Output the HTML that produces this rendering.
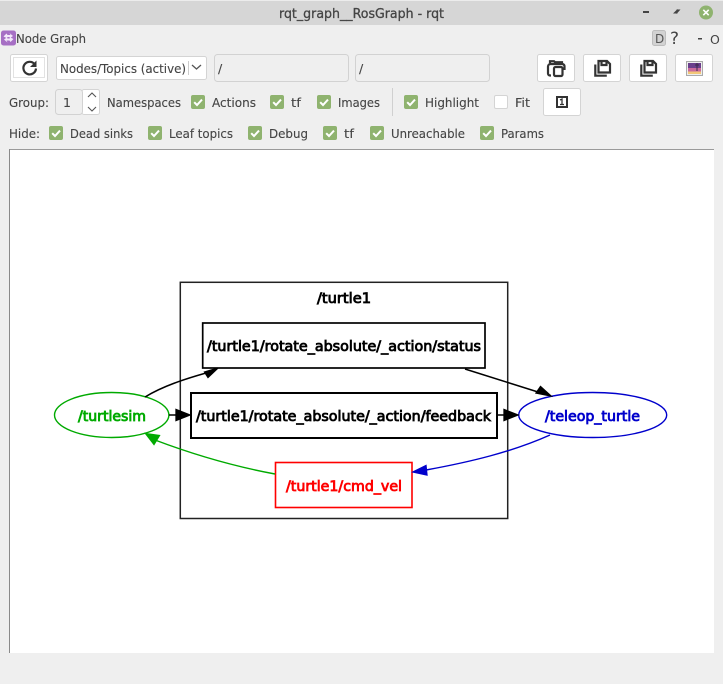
<!DOCTYPE html>
<html><head><meta charset="utf-8"><style>
html,body{margin:0;padding:0;background:#efefef;width:723px;height:684px;overflow:hidden}
svg{display:block}
.u{font-family:"DejaVu Sans",sans-serif;font-size:12.5px;fill:#444;stroke:#444;stroke-width:.12px}
.g{font-family:"DejaVu Sans",sans-serif;font-size:14px;stroke-width:.8px}
.btn{fill:#fff;stroke:#d4d4d4}
.chk{fill:#8fb36f}
</style></head><body>
<svg width="723" height="684" viewBox="0 0 723 684" xmlns="http://www.w3.org/2000/svg">
<defs>
<g id="ck"><rect width="14" height="14" rx="2" class="chk"/><path d="M3.200 7.200l2.800 2.800 5-5.400" fill="none" stroke="#fff" stroke-width="2"/></g>
<g id="sv"><path d="M5 1.500h8.500l3 3v8.500h-11.500zM8 1.500v4h5v-4" fill="none" stroke="#333" stroke-width="2.200"/><path d="M1.800 5v11.200h11.500" fill="none" stroke="#333" stroke-width="2.200"/></g>
</defs>
<rect width="723" height="684" fill="#efefef"/>
<!-- title bar -->
<rect width="723" height="25" fill="#d6d6d6"/><rect width="723" height="1" fill="#ececec"/>
<text x="279" y="18" textLength="165" lengthAdjust="spacingAndGlyphs" font-family="DejaVu Sans,sans-serif" font-size="13" fill="#444" stroke="#444" stroke-width=".3">rqt_graph__RosGraph - rqt</text>
<rect x="643" y="11" width="6" height="2" fill="#444"/>
<path d="M673 14l4.500-4.500V14zM680.500 10l-4 4.500V10z" fill="#444" transform="translate(0,-.5)"/>
<circle cx="706" cy="12.500" r="7" fill="#8fb36f"/><path d="M703.300 9.800l5.400 5.400M708.700 9.800l-5.400 5.400" stroke="#fff" stroke-width="1.600"/>
<!-- Node graph header -->
<rect x="1" y="30.500" width="15" height="15" rx="2.500" fill="#a66fc4"/>
<path d="M3.500 36.500l3-3 1 1.500h3l-1-2 3.500 3-3.500 2.500 .5-1.500h-3l.5 1.500zM13.500 39l-3 3-1-1.500h-3l1 2-3.500-3 3.500-2.500-.5 1.500h3l-.5-1.500z" fill="#f3e8fa"/>
<text class="u" x="16" y="43" textLength="70" lengthAdjust="spacingAndGlyphs">Node Graph</text>
<rect x="652.500" y="30.500" width="13" height="15" rx="2" fill="#d2d2d2" stroke="#bdbdbd"/>
<text x="655" y="43" font-family="DejaVu Sans,sans-serif" font-size="12" fill="#555">D</text>
<text x="670" y="44" font-family="DejaVu Sans,sans-serif" font-size="17" fill="#444">?</text>
<rect x="698" y="38" width="4" height="1.500" fill="#444"/>
<text x="710" y="44" font-family="DejaVu Sans,sans-serif" font-size="12.500" fill="#444">O</text>
<!-- toolbar row 1 -->
<rect class="btn" x="10.500" y="54.500" width="37" height="27" rx="2"/>
<rect x="13.500" y="57.500" width="31" height="20" fill="#fff" stroke="#e2e2e2"/>
<path d="M34.500 64a6.300 6.300 0 1 0 1.500 4.500" fill="none" stroke="#333" stroke-width="2.200"/><path d="M36.500 60.500v6.500h-6.500z" fill="#333"/>
<rect class="btn" x="56.500" y="56.500" width="150" height="23" rx="2"/>
<text class="u" x="60" y="73" textLength="126" lengthAdjust="spacingAndGlyphs">Nodes/Topics (active)</text>
<rect x="188" y="61" width="1" height="14" fill="#ccc"/>
<path d="M192 65l4.500 4 4.500-4" fill="none" stroke="#555" stroke-width="1.300"/>
<rect x="214.500" y="54.500" width="134" height="27" rx="3" fill="#efefef" stroke="#d2d2d2"/>
<text class="u" x="218" y="73">/</text>
<rect x="355.500" y="54.500" width="134" height="27" rx="3" fill="#efefef" stroke="#d2d2d2"/>
<text class="u" x="359" y="73">/</text>
<rect class="btn" x="537.500" y="54.500" width="37" height="27" rx="2"/>
<path d="M550 63v-1.800h4l1 1h7v2.300M551 75.500h-1a2 2 0 0 1-2-2v-7a2.500 2.500 0 0 1 2.500-2.500h12a2.500 2.500 0 0 1 2 2v4" fill="none" stroke="#333" stroke-width="2.200"/>
<rect x="554" y="67" width="8.500" height="9" rx="1.500" fill="#fff" stroke="#333" stroke-width="2.200"/>
<rect class="btn" x="583.500" y="54.500" width="37" height="27" rx="2"/>
<use href="#sv" x="593.500" y="59.500"/>
<rect class="btn" x="629.500" y="54.500" width="37" height="27" rx="2"/>
<use href="#sv" x="639.500" y="59.500"/>
<rect class="btn" x="675.500" y="54.500" width="37" height="27" rx="2"/>
<rect x="686.500" y="61.500" width="16" height="14" fill="#eee" stroke="#aaa"/>
<rect x="688" y="63" width="13" height="11" fill="#6a3f8c"/><rect x="688" y="68" width="13" height="3.500" fill="#c9699b"/><rect x="688" y="71.500" width="13" height="2.500" fill="#f2c878"/><path d="M697 63v8M695 65h4" stroke="#3b2a4a"/>
<!-- row 2 -->
<text class="u" x="9" y="107" textLength="40" lengthAdjust="spacingAndGlyphs">Group:</text>
<rect x="82" y="89.500" width="17.500" height="25" rx="2" fill="#fff" stroke="#d4d4d4"/>
<rect x="55.500" y="89.500" width="27" height="25" rx="3" fill="#efefef" stroke="#d2d2d2"/>
<text class="u" x="63" y="107">1</text>
<path d="M88 97l4-4 4 4M88 107l4 4 4-4" fill="none" stroke="#555" stroke-width="1.100"/>
<text class="u" x="107" y="107" textLength="74" lengthAdjust="spacingAndGlyphs">Namespaces</text>
<use href="#ck" x="191" y="95"/><text class="u" x="212" y="107" textLength="44" lengthAdjust="spacingAndGlyphs">Actions</text>
<use href="#ck" x="270" y="95"/><text class="u" x="291" y="107" textLength="10" lengthAdjust="spacingAndGlyphs">tf</text>
<use href="#ck" x="317" y="95"/><text class="u" x="338" y="107" textLength="42" lengthAdjust="spacingAndGlyphs">Images</text>
<rect x="392" y="88" width="1" height="28" fill="#d0d0d0"/>
<use href="#ck" x="404" y="95"/><text class="u" x="425" y="107" textLength="54" lengthAdjust="spacingAndGlyphs">Highlight</text>
<rect x="494.500" y="95.500" width="13" height="13" rx="1.500" fill="#fff" stroke="#d4d4d4"/><text class="u" x="515" y="107" textLength="15" lengthAdjust="spacingAndGlyphs">Fit</text>
<rect class="btn" x="543.500" y="88.500" width="37" height="27" rx="2"/>
<rect x="557" y="97" width="10" height="10" fill="none" stroke="#333" stroke-width="2"/><path d="M560 100l2-1v5.500M560 104.500h4" fill="none" stroke="#333" stroke-width="1.300"/>
<!-- row 3 -->
<text class="u" x="9" y="138" textLength="31" lengthAdjust="spacingAndGlyphs">Hide:</text>
<use href="#ck" x="49" y="126"/><text class="u" x="70" y="138" textLength="63" lengthAdjust="spacingAndGlyphs">Dead sinks</text>
<use href="#ck" x="148" y="126"/><text class="u" x="169" y="138" textLength="64" lengthAdjust="spacingAndGlyphs">Leaf topics</text>
<use href="#ck" x="248" y="126"/><text class="u" x="269" y="138" textLength="39" lengthAdjust="spacingAndGlyphs">Debug</text>
<use href="#ck" x="323" y="126"/><text class="u" x="344" y="138" textLength="10" lengthAdjust="spacingAndGlyphs">tf</text>
<use href="#ck" x="370" y="126"/><text class="u" x="391" y="138" textLength="74" lengthAdjust="spacingAndGlyphs">Unreachable</text>
<use href="#ck" x="480" y="126"/><text class="u" x="501" y="138" textLength="43" lengthAdjust="spacingAndGlyphs">Params</text>
<!-- graph view -->
<rect x="9" y="149" width="705" height="504" fill="#fff"/>
<rect x="9" y="149" width="705" height="1" fill="#9a9a9a"/>
<rect x="9" y="149" width="1" height="504" fill="#8a8a8a"/>
<rect x="180.300" y="282.300" width="327.400" height="236.200" fill="none" stroke="#222" stroke-width="1.500"/>
<text class="g" x="317" y="303" textLength="54" lengthAdjust="spacingAndGlyphs" fill="#000" stroke="#000">/turtle1</text>
<rect x="202.700" y="323" width="282.300" height="45" fill="none" stroke="#000" stroke-width="1.700"/>
<text class="g" x="207" y="351" textLength="274" lengthAdjust="spacingAndGlyphs" fill="#000" stroke="#000">/turtle1/rotate_absolute/_action/status</text>
<rect x="191" y="393" width="306" height="45" fill="none" stroke="#000" stroke-width="2"/>
<text class="g" x="196" y="421" textLength="295" lengthAdjust="spacingAndGlyphs" fill="#000" stroke="#000">/turtle1/rotate_absolute/_action/feedback</text>
<rect x="275.500" y="462.500" width="136.500" height="45" fill="none" stroke="#f00" stroke-width="1.600"/>
<text class="g" x="286" y="491" textLength="116" lengthAdjust="spacingAndGlyphs" fill="#f00" stroke="#f00">/turtle1/cmd_vel</text>
<ellipse cx="111.700" cy="415" rx="57.200" ry="22.500" fill="none" stroke="#00aa00" stroke-width="1.400"/>
<text class="g" x="78" y="421" textLength="68" lengthAdjust="spacingAndGlyphs" fill="#00aa00" stroke="#00aa00">/turtlesim</text>
<ellipse cx="592.700" cy="415" rx="74" ry="22.500" fill="none" stroke="#0000cc" stroke-width="1.400"/>
<text class="g" x="545" y="421" textLength="95" lengthAdjust="spacingAndGlyphs" fill="#0000cc" stroke="#0000cc">/teleop_turtle</text>
<!-- edges -->
<path d="M145 397C163 386 185 379 206 373" fill="none" stroke="#000" stroke-width="1.500"/>
<path d="M218 368L204.500 372 208 377.500z" fill="#000" stroke="#000" stroke-width="1.300"/>
<path d="M169 415H177" stroke="#000" stroke-width="1.500"/>
<path d="M190 415L176 409.500V420.500z" fill="#000" stroke="#000" stroke-width="1.300"/>
<path d="M465 369L538 392" fill="none" stroke="#000" stroke-width="1.500"/>
<path d="M551 396L540.500 386.500 536 393z" fill="#000" stroke="#000" stroke-width="1.300"/>
<path d="M497 415H506" stroke="#000" stroke-width="1.500"/>
<path d="M518 415L504 409.500V420.500z" fill="#000" stroke="#000" stroke-width="1.300"/>
<path d="M275 474C232 466 192 454 155 440" fill="none" stroke="#00aa00" stroke-width="1.400"/>
<path d="M145.500 433.500L159.500 435.500 154 444.500z" fill="#00aa00" stroke="#00aa00" stroke-width="1.300"/>
<path d="M550 435C512 452 470 462 426 470" fill="none" stroke="#0000cc" stroke-width="1.400"/>
<path d="M413 472L426 465.500 427 475z" fill="#0000cc" stroke="#0000cc" stroke-width="1.300"/>
</svg>
</body></html>
